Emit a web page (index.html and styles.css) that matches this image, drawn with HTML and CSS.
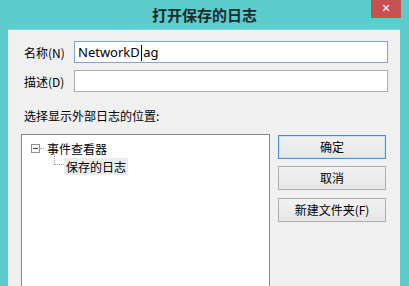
FILE: index.html
```html
<!DOCTYPE html>
<html>
<head>
    <title>打开保存的日志</title>
    <link rel="stylesheet" href="styles.css">
</head>
<body>

<div class="window">
    <div class="titlebar">
        <span></span>
        <span class="title">打开保存的日志</span>
        <span class="close">&#x2715;</span>
    </div>

    <div class="panel">
        <div class="field">
            <span class="label">名称(N)</span>
            <div class="edit focus">NetworkD<span class="caret">i</span>ag</div>
        </div>
        <div class="field">
            <span class="label">描述(D)</span>
            <div class="edit"></div>
        </div>

        <div class="caption">选择显示外部日志的位置:</div>

        <div class="bottom">
            <div class="tree">
                <div class="node">
                    <span class="toggle"></span><span class="dots"></span>
                    <span class="text">事件查看器</span>
                </div>
                <div class="node child">
                    <span class="branch"></span>
                    <span class="text selected">保存的日志</span>
                </div>
            </div>
            <div class="buttons">
                <div class="button default">确定</div>
                <div class="button">取消</div>
                <div class="button spaced">新建文件夹(F)</div>
            </div>
        </div>
    </div>
</div>

</body>
</html>
```

FILE: styles.css
```css
html, body {
    margin: 0;
    height: 100%;
    overflow: hidden;
}

body {
    background-color: #5ccdcc;
    font-family: "Noto Sans CJK SC", "Noto Sans", sans-serif;
    font-size: 12px;
    color: #000;
}

.window {
    display: flex;
    flex-direction: column;
    height: 100%;
}

.titlebar {
    height: 29px;
    display: grid;
    grid-template-columns: 1fr auto 1fr;
}

.title {
    font-size: 15px;
    font-weight: bold;
    color: #1b2b2b;
    line-height: 29px;
}

.close {
    justify-self: end;
    width: 30px;
    height: 18px;
    margin-right: 8px;
    background-color: #c75050;
    color: #fff;
    font-family: "DejaVu Sans", sans-serif;
    font-size: 11px;
    font-weight: bold;
    line-height: 18px;
    text-align: center;
}

.panel {
    flex: 1;
    margin: 0 9px 0 8px;
    background-color: #f0f0f0;
    border-top: 1px solid #8fd6d6;
    padding: 11px 12px 0 13px;
}

.field {
    display: flex;
    align-items: center;
    margin-bottom: 7px;
}

.label {
    width: 53px;
    padding-left: 3px;
    box-sizing: border-box;
}

.edit {
    flex: 1;
    height: 22px;
    box-sizing: border-box;
    border: 1px solid #abadb3;
    background-color: #fff;
    font-family: "Noto Sans", sans-serif;
    font-size: 13px;
    line-height: 20px;
    padding-left: 3px;
}

.edit.focus {
    border-color: #7ea4cf;
}

.caret {
    position: relative;
    color: transparent;
}

.caret::after {
    content: "";
    position: absolute;
    left: 1px;
    top: 2px;
    width: 1px;
    height: 16px;
    background-color: #000;
}

.caption {
    margin-top: 15px;
    padding-left: 3px;
    height: 17px;
}

.bottom {
    display: flex;
    gap: 8px;
    margin-top: 10px;
}

.tree {
    width: 249px;
    height: 152px;
    box-sizing: border-box;
    border: 1px solid #828790;
    border-bottom: none;
    background-color: #fff;
    padding: 4px 0 0 9px;
}

.node {
    display: flex;
    align-items: center;
    height: 19px;
}

.toggle {
    width: 7px;
    height: 7px;
    border: 1px solid #919191;
    position: relative;
    background-color: #fff;
}

.toggle::after {
    content: "";
    position: absolute;
    left: 1px;
    top: 3px;
    width: 5px;
    height: 1px;
    background-color: #444;
}

.dots {
    width: 4px;
    border-top: 1px dotted #a0a0a0;
    margin-right: 1px;
}

.node .text {
    padding: 0 2px;
    height: 17px;
    line-height: 17px;
}

.child {
    padding-left: 23px;
    align-items: stretch;
}

.branch {
    width: 9px;
    height: 12px;
    margin-top: -6px;
    border-left: 1px dotted #a0a0a0;
    border-bottom: 1px dotted #a0a0a0;
}

.selected {
    background-color: #ececec;
}

.buttons {
    width: 108px;
    display: flex;
    flex-direction: column;
    gap: 7px;
    margin-top: 1px;
}

.button {
    height: 24px;
    box-sizing: border-box;
    border: 1px solid #adadad;
    background: linear-gradient(#f2f2f2, #e6e6e6);
    text-align: center;
    line-height: 22px;
}

.button.default {
    border-color: #4a8ccb;
    box-shadow: inset 0 0 0 1px #cfe3f5;
}

.button.spaced {
    margin-top: 1px;
}
```
